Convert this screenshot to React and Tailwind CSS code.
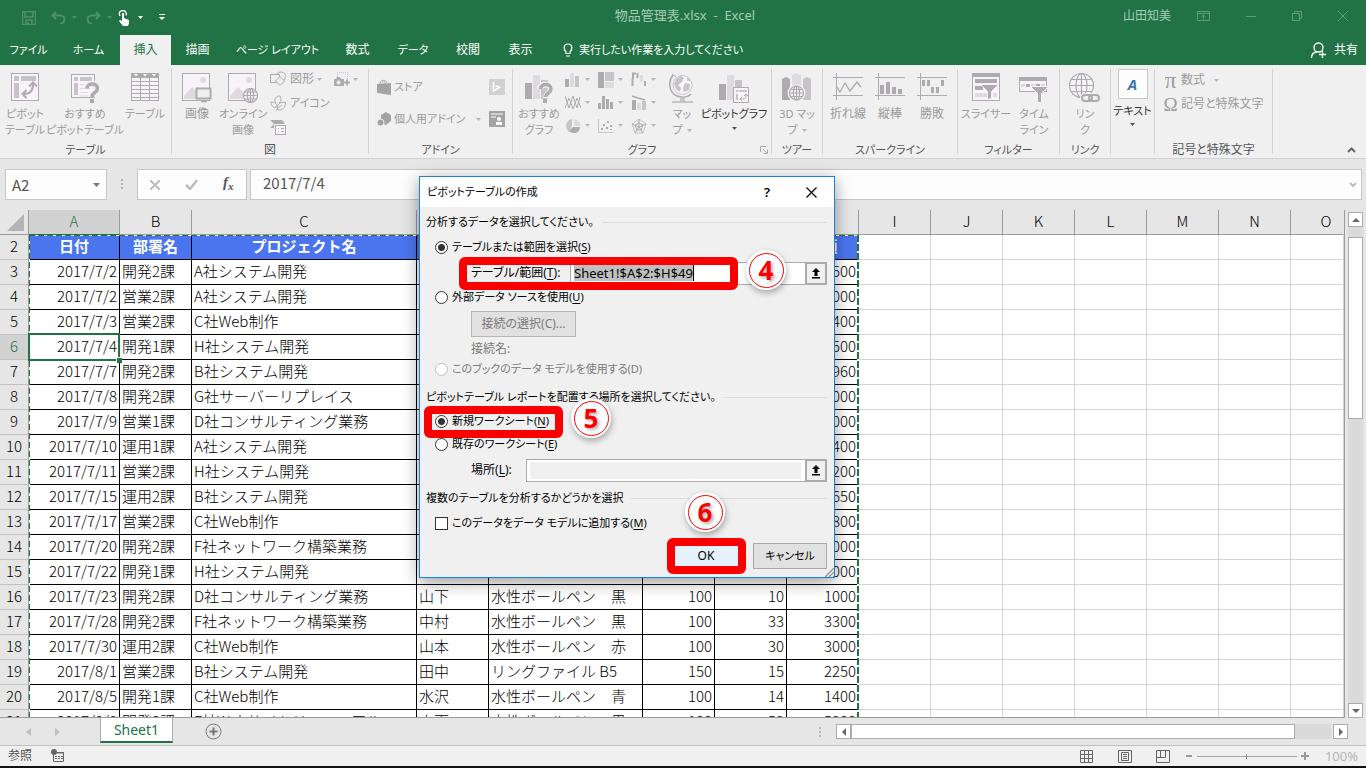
import React from "react";

const DARK = "#adabad";
const MID = "#c6c4c6";
const LIGHT = "#dedade";
const PALE = "#f7f3f8";

const Svg = ({ w, h, children, ...rest }) => (
  <svg width={w} height={h} viewBox={`0 0 ${w} ${h}`} fill="none" className="shrink-0" aria-hidden="true" {...rest}>
    {children}
  </svg>
);

const Caret = ({ color = "#b5b5b5" }) => (
  <Svg w={5} h={3}>
    <path d="M0 0h5L2.500 3z" fill={color} />
  </Svg>
);

/* ---------- ribbon icons ---------- */

const PivotIcon = () => (
  <Svg w={28} h={28}>
    <rect x=".5" y=".5" width="27" height="27" fill={PALE} stroke={DARK} />
    <path d="M3 3h5v5H3zM10 3h15v5H10zM3 10h5v15H3z" fill={MID} />
    <path d="M13 21c6 0 9-3 9-10" stroke={DARK} strokeWidth="2" />
    <path d="M18 13.500l4-4 4 4M15.500 17l-4 4 4 4" stroke={DARK} strokeWidth="2" />
  </Svg>
);

const SuggestPivotIcon = () => (
  <Svg w={28} h={30}>
    <rect x=".5" y="1.500" width="23" height="23" fill={PALE} stroke={DARK} />
    <path d="M3 4h4v4H3zM9 4h12v4H9zM3 10h4v12H3z" fill={MID} />
    <path d="M9 11.500h12M9 15.500h10M9 19.500h8M9 23h8" stroke={LIGHT} />
    <path d="M15.500 15c0-6 11-6 11 0 0 4-5 4-5 9" stroke="#f0f0f0" strokeWidth="6" />
    <path d="M16 15.500c0-6 10.500-6 10.500 0 0 4-5.500 4-5.500 8.500" stroke={DARK} strokeWidth="3.500" />
    <path d="M19 26h4v4h-4z" fill={DARK} />
  </Svg>
);

const TableIcon = () => (
  <Svg w={28} h={28}>
    <rect x=".5" y=".5" width="27" height="27" fill={PALE} stroke={DARK} />
    <path d="M0 0h28v5H0z" fill={DARK} />
    <path d="M3 1h4L5 3.500zM12 1h4l-2 2.500zM21 1h4l-2 2.500z" fill="#fff" />
    <path d="M0 8.500h28M0 12.500h28M0 16.500h28M0 20.500h28M0 24.500h28M9.500 5v23M18.500 5v23" stroke={DARK} />
  </Svg>
);

const Photo = () => (
  <>
    <rect x=".5" y=".5" width="27" height="27" fill={PALE} stroke={DARK} />
    <circle cx="21" cy="7" r="3" fill={LIGHT} />
    <path d="M2 26V23l8-9 9 9v3z" fill={LIGHT} />
  </>
);

const PictureIcon = () => (
  <Svg w={30} h={30}>
    <Photo />
    <path d="M14.500 15.500h14v10h-14z" fill="#f0f0f0" stroke={DARK} strokeWidth="2" />
    <path d="M19 28.500h6" stroke={DARK} strokeWidth="1.500" />
  </Svg>
);

const Globe = ({ cx, cy, r }) => (
  <g stroke={DARK} strokeWidth="1.200">
    <circle cx={cx} cy={cy} r={r} fill={PALE} />
    <ellipse cx={cx} cy={cy} rx={r / 2.2} ry={r} />
    <path
      d={`M${cx} ${cy - r}v${r * 2}M${cx - r} ${cy}h${r * 2}M${cx - r * 0.85} ${cy - r / 2}h${r * 1.7}M${cx - r * 0.85} ${cy + r / 2}h${r * 1.7}`}
    />
  </g>
);

const OnlinePictureIcon = () => (
  <Svg w={30} h={30}>
    <Photo />
    <Globe cx={22.5} cy={22.5} r={7} />
  </Svg>
);

const ShapesIcon = () => (
  <Svg w={17} h={16}>
    <circle cx="11" cy="5.500" r="4.500" stroke={MID} strokeWidth="1.500" />
    <path d="M.5 3.500h9v8h-9z" fill="#f0f0f0" stroke={DARK} />
    <path d="M10 5.500l4.500 4.500-4.500 4.500L5.500 10z" fill="#f0f0f0" stroke={DARK} />
  </Svg>
);

const LeafIcon = () => (
  <Svg w={17} h={16} stroke={DARK}>
    <path d="M6 8c-3-4 0-7 4-7 1 3 2 5-1 7" />
    <path d="M1 7c3 0 6 1 6 5-4 1-6-1-6-5z" />
    <path d="M15.500 7.500c-6-1-9 2-8 7 5 2 8-2 8-7zM6 15.500c2-3 4-4 6-5" />
  </Svg>
);

const SmartArtIcon = () => (
  <Svg w={17} h={17}>
    <path d="M0 1h12l3 4H4z" fill={DARK} />
    <path d="M0 9l4-4v4z" fill={DARK} />
    <rect x="5.500" y="6.500" width="10" height="9" fill={PALE} stroke={DARK} />
    <path d="M8 9.500h1M8 12.500h1M11 9.500h3M11 12.500h3" stroke={DARK} />
  </Svg>
);

const ScreenshotIcon = () => (
  <Svg w={16} h={15}>
    <path d="M3.500 7V.5h10V8" stroke={MID} strokeDasharray="1 1" />
    <path d="M0 7h2l1-2h3l1 2h3v7H0z" fill={DARK} />
    <circle cx="4.500" cy="10.500" r="2" fill="#f0f0f0" />
    <path d="M10 10.500h6M13 7.500v6" stroke={DARK} strokeWidth="2" />
  </Svg>
);

const StoreIcon = () => (
  <Svg w={14} h={16}>
    <path d="M3 5c0-5 5-5 5 0M5 4c1-4 5-3 5 0" stroke={DARK} />
    <path d="M0 5l14-1v12L0 14z" fill="#a3a3a3" />
  </Svg>
);

const AddinIcon = () => (
  <Svg w={14} h={15}>
    <path d="M9 0l5 3v6l-5 4-5-2V3z" fill="#a3a3a3" />
    <circle cx="3.500" cy="10.500" r="3.500" fill="#a3a3a3" stroke="#f0f0f0" />
  </Svg>
);

const BingIcon = () => (
  <Svg w={16} h={16}>
    <path d="M0 0h16v16H0z" fill="#d3d0d3" />
    <path d="M4.500 3v9l6-3.500-4-2" stroke="#fff" strokeWidth="1.500" />
  </Svg>
);

const PeopleGraphIcon = () => (
  <Svg w={16} h={16}>
    <path d="M0 0h16v16H0z" fill="#a3a3a3" />
    <path d="M2 3h12M2 6h5" stroke="#fff" />
    <circle cx="10" cy="8" r="2" fill="#fff" />
    <path d="M7 14v-3h6v3z" fill="#fff" />
  </Svg>
);

const SuggestChartIcon = () => (
  <Svg w={28} h={30}>
    <path d="M0 10h7v16H0z" fill={DARK} />
    <path d="M8 2h7v24H8z" fill={LIGHT} />
    <path d="M16 7h7v19h-7z" fill={MID} />
    <path d="M15 16c0-6 11-6 11 0 0 4-5 4-5 9" stroke="#f0f0f0" strokeWidth="6" />
    <path d="M15.500 16c0-6 10.500-6 10.500 0 0 4-5.500 4-5.500 8" stroke={DARK} strokeWidth="3.500" />
    <path d="M18 26h4v4h-4z" fill={DARK} />
  </Svg>
);

const chartIcons = [
  <Svg w={16} h={16} key="col">
    <path d="M0 7h4v8H0z" fill={DARK} />
    <path d="M5 1h4v14H5z" fill={LIGHT} />
    <path d="M10 4h4v11h-4z" fill={MID} />
  </Svg>,
  <Svg w={16} h={16} key="tree">
    <path d="M0 0h6v16H0z" fill={DARK} />
    <path d="M7 0h9v9H7z" fill={MID} />
    <path d="M7 10h9v6H7z" fill={LIGHT} />
  </Svg>,
  <Svg w={16} h={16} key="fall">
    <path d="M1.500 6v8M6.500 1v5M5 1.500H2v5" stroke={DARK} strokeWidth="2" />
    <path d="M10.500 3v7" stroke={LIGHT} strokeWidth="3" />
    <path d="M14 9v5" stroke={DARK} strokeWidth="2" />
  </Svg>,
  <Svg w={16} h={16} key="line">
    <path d="M0 1l4 12 4-12 4 12 3-11" stroke={DARK} />
    <path d="M0 13L4 3l4 11 4-11 4 10" stroke={DARK} />
  </Svg>,
  <Svg w={16} h={16} key="hist">
    <path d="M0 8h3v6H0zM4 1h3v13H4zM8 4h3v10H8zM12 7h3v7h-3z" fill={DARK} />
  </Svg>,
  <Svg w={16} h={16} key="combo">
    <path d="M1 5h4v10H1z" fill={DARK} />
    <path d="M6 8h4v7H6z" fill={LIGHT} />
    <path d="M11 6h4v9h-4z" fill={MID} />
    <path d="M1 1l6 2 7 2" stroke={DARK} strokeWidth="1.500" />
  </Svg>,
  <Svg w={16} h={16} key="pie">
    <path d="M9 8V1a7 7 0 0 1 6.500 7z" fill={LIGHT} />
    <path d="M7 8V1a7 7 0 0 0-6 7c0 3 2 5 3 6z" fill={MID} />
    <path d="M8 9h7c0 6-7 8-11 4z" fill={DARK} />
  </Svg>,
  <Svg w={16} h={16} key="dots">
    <path d="M.5 1v13.500H15" stroke={MID} />
    <path d="M3 10h2v2H3zM5 6h2v2H5zM8 9h2v2H8zM9 3h2v2H9zM12 7h2v2h-2zM12 11h2v1h-2z" fill={DARK} />
  </Svg>,
  <Svg w={16} h={16} key="radar">
    <path d="M8 1l7 5-3 9H4L1 6z" stroke={MID} />
    <path d="M8 5l4 2-2 5H6L4 7zM8 1v8l7-3M8 9l4 6M8 9l-4 6M8 9L1 6" stroke={DARK} />
  </Svg>,
];

const MapIcon = () => (
  <Svg w={26} h={30}>
    <circle cx="13.500" cy="12" r="9.500" fill={PALE} stroke={MID} />
    <path d="M7 6l5-3 3 2-2 4-4 3 3 3-1 4-4-3-2-5zM16 10l5 1-1 6-5 2-1-4zM18 4l4 4-4 0z" fill={MID} />
    <path d="M4 2C-1 8 0 18 6 22c5 3 12 3 16-1" stroke={DARK} strokeWidth="1.500" />
    <path d="M3 1l4 3" stroke={DARK} />
    <path d="M11 24h5v4h-5zM3 28h21v2H3z" fill={MID} />
  </Svg>
);

const PivotChartIcon = () => (
  <Svg w={30} h={30}>
    <path d="M0 11h7v16H0z" fill={DARK} />
    <path d="M8 2h7v25H8z" fill={LIGHT} />
    <path d="M16 7h7v8h-7z" fill={MID} />
    <rect x="14.500" y="14.500" width="15" height="15" fill={PALE} stroke={DARK} />
    <path d="M17 17h2v2h-2zM20 17h8v2h-8zM17 21h2v6h-2z" fill={MID} />
    <path d="M21 26h3c2 0 3-1 3-4M25 23l2-2 2 2M23 24l-2 2 2 2" stroke={DARK} />
  </Svg>
);

const Map3DIcon = () => (
  <Svg w={30} h={28}>
    <path d="M0 6l4-2 4 2v21H0z" fill={DARK} />
    <path d="M10 2l4-2 5 2v18h-9z" fill={LIGHT} />
    <path d="M21 6l4-2 4 2v21h-8z" fill={MID} />
    <circle cx="14.500" cy="20" r="9" fill="#f0f0f0" />
    <Globe cx={14.5} cy={20} r={7} />
  </Svg>
);

const SparkFrame = ({ children }) => (
  <Svg w={30} h={28}>
    <path d="M0 4.500h30M0 22.500h30M3.500 0v27" stroke={DARK} />
    {children}
  </Svg>
);

const SlicerIcon = () => (
  <Svg w={28} h={28}>
    <rect x=".5" y=".5" width="27" height="27" fill={PALE} stroke={DARK} />
    <path d="M0 0h28v4H0zM3 6h22v4H3zM3 13h8v4H3z" fill={DARK} />
    <path d="M3 20h12v4H3zM21 20h4v4h-4z" fill={LIGHT} />
    <path d="M8.500 11.500h18l-7 7v7l-4 1v-8z" fill={DARK} stroke={PALE} />
  </Svg>
);

const TimelineIcon = () => (
  <Svg w={30} h={30}>
    <rect x=".5" y="4.500" width="27" height="14" fill={PALE} stroke={DARK} />
    <path d="M0 4h28v4H0z" fill={DARK} />
    <path d="M2 11h4v3H2zM12 11h4v3h-4zM22 11h4v3h-4z" fill={LIGHT} />
    <path d="M7 11h4v3H7zM17 11h4v3h-4z" fill={DARK} />
    <path d="M11.500 13.500h18l-7 7v9h-4v-9z" fill={DARK} stroke={PALE} />
  </Svg>
);

const LinkIcon = () => (
  <Svg w={32} h={30}>
    <Globe cx={12.5} cy={12.5} r={12} />
    <rect x="11" y="20" width="21" height="10" rx="5" fill="#f0f0f0" />
    <rect x="13" y="22" width="10" height="6" rx="3" stroke={DARK} strokeWidth="2" />
    <rect x="20" y="22" width="10" height="6" rx="3" stroke={DARK} strokeWidth="2" />
  </Svg>
);

/* ---------- ribbon ---------- */

const BigButton = ({ icon, lines, width, kanji, dark, arrow }) => (
  <button
    className={`flex flex-col items-center pt-2 shrink-0 ${width} ${kanji ? "text-[12px]" : "text-[11px]"} ${
      dark ? "text-[#333]" : "text-[#9b9b9b]"
    }`}
  >
    <span className="flex h-[33px] items-start justify-center">{icon}</span>
    {lines.map((line, i) => (
      <span key={line} className="flex h-4 items-center gap-1 whitespace-nowrap">
        {line}
        {arrow === "inline" && i === lines.length - 1 && <Caret />}
      </span>
    ))}
    {arrow === "below" && (
      <span className="flex h-3 items-center">
        <Caret color="#555" />
      </span>
    )}
  </button>
);

const Group = ({ title, width, kanji, children }) => (
  <div className={`flex flex-col shrink-0 ${width}`}>
    <div className="flex h-[77px] w-full">{children}</div>
    <div className={`h-4 text-center leading-4 text-[#555] ${kanji ? "text-[12px]" : "text-[11px]"}`}>{title}</div>
  </div>
);

const Divider = () => <div className="mt-1 h-[85px] w-px shrink-0 bg-[#d2d2d2]" />;

const SmallButton = ({ icon, label, kanji, arrow }) => (
  <button
    className={`flex h-6 items-center gap-[3px] whitespace-nowrap text-[#9b9b9b] ${kanji ? "text-[12px]" : "text-[11px]"}`}
  >
    {icon}
    {label && <span>{label}</span>}
    {arrow && <Caret />}
  </button>
);

const Ribbon = () => (
  <div className="flex h-[94px] shrink-0 border-b border-[#d2d2d2] bg-[#f0f0f0]">
    <Group title="テーブル" width="w-[171px]">
      <BigButton width="w-[50px]" icon={<PivotIcon />} lines={["ピボット", "テーブル"]} />
      <BigButton width="w-[70px]" icon={<SuggestPivotIcon />} lines={["おすすめ", "ピボットテーブル"]} />
      <BigButton width="w-[50px]" icon={<TableIcon />} lines={["テーブル"]} />
    </Group>
    <Divider />
    <Group title="図" width="w-[196px]" kanji>
      <BigButton width="w-[50px]" icon={<PictureIcon />} lines={["画像"]} kanji />
      <BigButton width="w-[42px]" icon={<OnlinePictureIcon />} lines={["オンライン", "画像"]} />
      <div className="ml-1.5 flex w-16 flex-col pt-0.5">
        <SmallButton icon={<ShapesIcon />} label="図形" arrow kanji />
        <SmallButton icon={<LeafIcon />} label="アイコン" />
        <SmallButton icon={<SmartArtIcon />} />
      </div>
      <div className="pt-0.5">
        <SmallButton icon={<ScreenshotIcon />} arrow />
      </div>
    </Group>
    <Divider />
    <Group title="アドイン" width="w-[143px]">
      <div className="flex w-full flex-col gap-2 pt-2.5 pr-[7px] pl-2">
        <div className="flex items-center justify-between">
          <SmallButton icon={<StoreIcon />} label="ストア" />
          <BingIcon />
        </div>
        <div className="flex items-center justify-between">
          <SmallButton icon={<AddinIcon />} label="個人用アドイン" />
          <span className="flex items-center gap-2">
            <Caret />
            <PeopleGraphIcon />
          </span>
        </div>
      </div>
    </Group>
    <Divider />
    <div className="relative flex shrink-0">
      <Group title="グラフ" width="w-[258px]">
        <BigButton width="w-[52px]" icon={<SuggestChartIcon />} lines={["おすすめ", "グラフ"]} />
        <div className="grid w-[99px] grid-cols-3 content-start pt-[3px] [grid-auto-rows:23px]">
          {chartIcons.map((icon) => (
            <button key={icon.key} className="flex items-center gap-1">
              {icon}
              <Caret />
            </button>
          ))}
        </div>
        <BigButton width="w-[36px]" icon={<MapIcon />} lines={["マッ", "プ"]} arrow="inline" />
        <BigButton width="w-[68px]" icon={<PivotChartIcon />} lines={["ピボットグラフ"]} dark arrow="below" />
      </Group>
      <Svg w={8} h={8} style={{ position: "absolute", right: 3, bottom: 4 }}>
        <path d="M.5 6V.5H6M3 3l4 4M7.500 3.500v4h-4" stroke={DARK} />
      </Svg>
    </div>
    <Divider />
    <Group title="ツアー" width="w-[50px]">
      <BigButton width="w-[50px]" icon={<Map3DIcon />} lines={["3D マッ", "プ"]} arrow="inline" />
    </Group>
    <Divider />
    <Group title="スパークライン" width="w-[134px]">
      <span className="w-1" />
      <BigButton
        width="w-[42px]"
        kanji
        lines={["折れ線"]}
        icon={
          <SparkFrame>
            <path d="M4 14l3 5 5-9 5 8 7-9 4 5" stroke={DARK} strokeWidth="1.300" />
          </SparkFrame>
        }
      />
      <BigButton
        width="w-[42px]"
        kanji
        lines={["縦棒"]}
        icon={
          <SparkFrame>
            <path d="M5 12h4v9H5zM11 9h4v12h-4zM17 14h4v7h-4zM23 16h4v5h-4z" fill={DARK} />
          </SparkFrame>
        }
      />
      <BigButton
        width="w-[42px]"
        kanji
        lines={["勝敗"]}
        icon={
          <SparkFrame>
            <path d="M5 7h3v6H5zM10 7h3v6h-3zM14 14h3v6h-3zM19 14h3v6h-3zM24 7h3v6h-3z" fill={DARK} />
          </SparkFrame>
        }
      />
    </Group>
    <Divider />
    <Group title="フィルター" width="w-[101px]">
      <BigButton width="w-[56px]" icon={<SlicerIcon />} lines={["スライサー"]} />
      <BigButton width="w-[40px]" icon={<TimelineIcon />} lines={["タイム", "ライン"]} />
    </Group>
    <Divider />
    <Group title="リンク" width="w-[50px]">
      <BigButton width="w-[50px]" icon={<LinkIcon />} lines={["リン", "ク"]} />
    </Group>
    <Divider />
    <Group title="" width="w-[43px]">
      <button className="flex w-full flex-col items-center pt-1 text-[11px] text-[#333]">
        <span className="flex h-[30px] w-[30px] items-center justify-center border border-[#c6c6c6] bg-[#fdfdfd] text-[15px] font-bold text-[#3c76b4] italic">
          A
        </span>
        <span className="mt-1 h-5 whitespace-nowrap">テキスト</span>
        <Caret color="#555" />
      </button>
    </Group>
    <Divider />
    <Group title="記号と特殊文字" width="w-[117px]" kanji>
      <div className="flex flex-col pt-[3px] pl-2 text-[12px]">
        <button className="flex h-6 items-center gap-[3px] text-[#9b9b9b]">
          <span className="w-[15px] text-center font-['Liberation_Serif',serif] text-[23px] leading-none">π</span>
          数式
          <span className="ml-1.5">
            <Caret />
          </span>
        </button>
        <button className="flex h-6 items-center gap-[3px] whitespace-nowrap text-[#9b9b9b]">
          <span className="w-[15px] text-center font-['Liberation_Serif',serif] text-[19px] leading-none">Ω</span>
          記号と特殊文字
        </button>
      </div>
    </Group>
    <Divider />
    <button className="ml-auto flex items-end pr-2.5 pb-[5px]" aria-label="リボンを折りたたむ">
      <Svg w={9} h={6}>
        <path d="M1 5l3.500-3.500L8 5" stroke="#666" strokeWidth="2" />
      </Svg>
    </button>
  </div>
);

/* ---------- title bar and tabs ---------- */

const TitleBar = () => (
  <div className="flex h-[35px] shrink-0 items-center text-[12px] text-[#a6cbb5]">
    <div className="flex flex-1 items-center pl-[22px] text-[#4f9069]">
      <Svg w={14} h={14}>
        <path d="M.5.5h13v13H.5zM3 1v5h8V1M4 13V9h6v4M6 11v2" stroke="currentColor" strokeWidth="1.500" />
      </Svg>
      <span className="ml-[15px] flex items-center gap-[6px]">
        <Svg w={15} h={13}>
          <path d="M5 1L1.500 4.500 5 8M2 4.500h7c6 0 6 8 0 8" stroke="currentColor" strokeWidth="2" />
        </Svg>
        <Caret color="#4f9069" />
      </span>
      <span className="ml-[9px] flex items-center gap-[6px]">
        <Svg w={15} h={13}>
          <path d="M10 1l3.500 3.500L10 8M13 4.500H6c-6 0-6 8 0 8" stroke="currentColor" strokeWidth="2" />
        </Svg>
        <Caret color="#4f9069" />
      </span>
      <span className="ml-[6px] flex items-center gap-[8px]">
        <Svg w={12} h={16}>
          <path d="M2 6C0 2 3 .5 5 .5s4 2 3 5" stroke="#fff" strokeWidth="1.300" />
          <path d="M4 3h2v5l5 2v3l-1 3H5l-4-5 1-1 2 1z" fill="#fff" />
        </Svg>
        <Caret color="#fff" />
      </span>
      <Svg w={6} h={7} style={{ marginLeft: 16 }}>
        <path d="M0 .5h6" stroke="#fff" />
        <path d="M0 3h6L3 6z" fill="#fff" />
      </Svg>
    </div>
    <div className="pb-1 text-[13px] whitespace-pre">物品管理表.xlsx  -  Excel</div>
    <div className="flex flex-1 items-center justify-end pr-[18px] pb-1">
      <span>山田知美</span>
      <span className="ml-[26px] flex items-center gap-9 text-[#5f9d78]">
        <Svg w={13} h={10}>
          <path d="M.5.5h12v9H.5zM0 2.500h13M6.500 8V4M4.500 6l2-2 2 2" stroke="currentColor" />
        </Svg>
        <Svg w={10} h={10}>
          <path d="M0 5.500h10" stroke="currentColor" />
        </Svg>
        <Svg w={10} h={10}>
          <path d="M.5 2.500h7v7h-7zM2.500 2V.5h7v7H8" stroke="currentColor" />
        </Svg>
        <Svg w={10} h={10}>
          <path d="M0 0l10 10M10 0L0 10" stroke="currentColor" />
        </Svg>
      </span>
    </div>
  </div>
);

const tabs = [
  { name: "ファイル", width: "w-[57px] text-[11px]" },
  { name: "ホーム", width: "w-[63px] text-[11px]" },
  { name: "挿入", width: "w-[51px] text-[12px]", active: true },
  { name: "描画", width: "w-[53px] text-[12px]" },
  { name: "ページ レイアウト", width: "w-[107px] text-[11px]" },
  { name: "数式", width: "w-[53px] text-[12px]" },
  { name: "データ", width: "w-[58px] text-[11px]" },
  { name: "校閲", width: "w-[52px] text-[12px]" },
  { name: "表示", width: "w-[53px] text-[12px]" },
];

const TabRow = () => (
  <div className="flex h-[30px] shrink-0 items-stretch text-white">
    {tabs.map((tab) => (
      <button
        key={tab.name}
        className={`shrink-0 whitespace-nowrap ${tab.width} ${tab.active ? "bg-[#f0f0f0] text-[#217346]" : ""}`}
      >
        {tab.name}
      </button>
    ))}
    <button className="ml-4 flex items-center gap-1.5 text-[11px]">
      <Svg w={10} h={14}>
        <path d="M3 9C0 6 .5 1 5 1s5 5 2 8v1.500H3zM3 13h4" stroke="#fff" strokeWidth="1.200" />
      </Svg>
      実行したい作業を入力してください
    </button>
    <button className="ml-auto flex items-center gap-2 pr-2 text-[12px]">
      <Svg w={15} h={16}>
        <circle cx="7.500" cy="5.500" r="4.500" stroke="#fff" strokeWidth="1.300" />
        <path d="M.5 16c0-4 2-5.500 5-6M8 12.500h7M11.500 9v7" stroke="#fff" strokeWidth="1.300" />
      </Svg>
      共有
    </button>
  </div>
);

/* ---------- formula bar ---------- */

const FormulaBar = () => (
  <div className="flex h-[51px] shrink-0 items-start pt-2.5 pr-1 pl-[5px]">
    <div className="flex h-[31px] w-[102px] shrink-0 items-center border border-[#c6c6c6] bg-[#fdfdfd] pr-1.5">
      <input
        aria-label="名前ボックス"
        defaultValue="A2"
        className="w-full min-w-0 pt-0.5 pl-1.5 font-['Noto_Sans_CJK_JP',sans-serif] text-[15px] text-[#555]"
      />
      <Svg w={7} h={4}>
        <path d="M0 0h7L3.500 4z" fill="#777" />
      </Svg>
    </div>
    <Svg w={30} h={31}>
      <path d="M14 10h2v2h-2zM14 14h2v2h-2zM14 18h2v2h-2z" fill="#b0b0b0" />
    </Svg>
    <div className="flex h-[31px] w-[110px] shrink-0 items-center justify-around border border-[#c6c6c6] bg-[#fdfdfd]">
      <button aria-label="キャンセル">
        <Svg w={10} h={10}>
          <path d="M0 0l10 10M10 0L0 10" stroke="#bdbdbd" strokeWidth="2" />
        </Svg>
      </button>
      <button aria-label="入力">
        <Svg w={13} h={11}>
          <path d="M1 6l4 4 7-9" stroke="#bdbdbd" strokeWidth="2.500" />
        </Svg>
      </button>
      <button className="pb-1 font-['Liberation_Serif',serif] text-[15px] font-bold text-[#555] italic">
        f<sub className="text-[11px]">x</sub>
      </button>
    </div>
    <div className="ml-[3px] flex h-[31px] flex-1 items-center border border-[#c6c6c6] bg-[#fdfdfd] pr-1">
      <input
        aria-label="数式バー"
        defaultValue="2017/7/4"
        className="flex-1 pb-0.5 pl-3 font-['Noto_Sans_CJK_JP',sans-serif] text-[15px] text-[#555]"
      />
      <Svg w={8} h={6}>
        <path d="M1 1l3 3 3-3" stroke="#bdbdbd" strokeWidth="2" />
      </Svg>
    </div>
  </div>
);

/* ---------- sheet ---------- */

const columns = ["A", "B", "C", "D", "E", "F", "G", "H", "I", "J", "K", "L", "M", "N", "O"];
const header = ["日付", "部署名", "プロジェクト名", "", "", "", "", "金額"];
const rows = [
  ["2017/7/2", "開発2課", "A社システム開発", "", "", "", "", 1500],
  ["2017/7/2", "営業2課", "A社システム開発", "", "", "", "", 2000],
  ["2017/7/3", "営業2課", "C社Web制作", "", "", "", "", 1400],
  ["2017/7/4", "開発1課", "H社システム開発", "", "", "", "", 2500],
  ["2017/7/7", "開発2課", "B社システム開発", "", "", "", "", 960],
  ["2017/7/8", "開発2課", "G社サーバーリプレイス", "", "", "", "", 3000],
  ["2017/7/9", "営業1課", "D社コンサルティング業務", "", "", "", "", 1000],
  ["2017/7/10", "運用1課", "A社システム開発", "", "", "", "", 2400],
  ["2017/7/11", "営業2課", "H社システム開発", "", "", "", "", 1200],
  ["2017/7/15", "運用2課", "B社システム開発", "", "", "", "", 1650],
  ["2017/7/17", "営業2課", "C社Web制作", "", "", "", "", 1800],
  ["2017/7/20", "開発2課", "F社ネットワーク構築業務", "", "", "", "", 2000],
  ["2017/7/22", "開発1課", "H社システム開発", "", "", "", "", 3000],
  ["2017/7/23", "開発2課", "D社コンサルティング業務", "山下", "水性ボールペン　黒", 100, 10, 1000],
  ["2017/7/28", "開発2課", "F社ネットワーク構築業務", "中村", "水性ボールペン　黒", 100, 33, 3300],
  ["2017/7/30", "運用2課", "C社Web制作", "山本", "水性ボールペン　赤", 100, 30, 3000],
  ["2017/8/1", "営業2課", "B社システム開発", "田中", "リングファイル B5", 150, 15, 2250],
  ["2017/8/5", "開発1課", "C社Web制作", "水沢", "水性ボールペン　青", 100, 14, 1400],
  ["2017/8/8", "開発2課", "F社Webサイトリニューアル", "山下", "水性ボールペン　黒", 100, 53, 5300],
];
const alignRight = [true, false, false, false, false, true, true, true];
const emptyColumns = columns.slice(8);

const RowHead = ({ n, active }) => (
  <th
    className={`border-r border-b border-r-[#9b9b9b] border-b-[#c0c0c0] pb-0.5 font-light ${
      active ? "bg-[#d2d2d2] text-[#217346]" : "bg-[#e6e6e6]"
    }`}
  >
    {n}
  </th>
);

const EmptyCells = () => emptyColumns.map((c) => <td key={c} className="border-r border-b border-[#d4d4d4]" />);

const Sheet = () => (
  <div className="relative min-w-0 flex-1 overflow-hidden border-r border-b border-[#9b9b9b] bg-white">
    <table className="w-full table-fixed border-separate border-spacing-0 font-['Noto_Sans_CJK_JP',sans-serif] text-[15px] leading-[22px] font-light whitespace-nowrap text-black">
      <colgroup>
        <col className="w-[29px]" />
        <col className="w-[91px]" />
        <col className="w-[72px]" />
        <col className="w-[225px]" />
        <col className="w-[72px]" />
        <col className="w-[154px]" />
        <col className="w-[72px]" />
        <col className="w-[72px]" />
        <col className="w-[72px]" />
        <col className="w-[72px]" />
        <col className="w-[72px]" />
        <col className="w-[72px]" />
        <col className="w-[72px]" />
        <col className="w-[72px]" />
        <col className="w-[72px]" />
        <col />
      </colgroup>
      <thead>
        <tr className="h-[25px]">
          <th className="border-r border-b border-[#9b9b9b] bg-[#e6e6e6]">
            <div className="flex justify-end pr-1">
              <Svg w={17} h={17}>
                <path d="M17 0v17H0z" fill="#b4b4b4" />
              </Svg>
            </div>
          </th>
          {columns.map((c) => (
            <th
              key={c}
              className={`border-r border-b pb-0.5 font-light ${
                c === "A"
                  ? "border-r-[#9b9b9b] border-b-[#217346] bg-[#d2d2d2] text-[#217346]"
                  : c === "O"
                    ? "border-r-[#e6e6e6] border-b-[#9b9b9b] bg-[#e6e6e6] pl-[18px]"
                    : "border-[#9b9b9b] bg-[#e6e6e6]"
              }`}
            >
              {c}
            </th>
          ))}
        </tr>
      </thead>
      <tbody>
        <tr>
          <RowHead n={2} />
          {header.map((h, i) => (
            <td key={i} className="border-r border-b border-black bg-[#4a75ee] pb-0.5 text-center font-bold text-white">
              {h}
            </td>
          ))}
          <EmptyCells />
        </tr>
        {rows.map((row, r) => (
          <tr key={r}>
            <RowHead n={r + 3} active={r === 3} />
            {row.map((value, c) => (
              <td
                key={c}
                className={`relative border-r border-b border-black px-0.5 pb-0.5 ${alignRight[c] ? "text-right" : "text-left"}`}
              >
                {value}
                {r === 3 && c === 0 && (
                  <span className="absolute -inset-x-px -top-0.5 -bottom-0.5 z-10 border-2 border-[#217346]">
                    <span className="absolute -right-1 -bottom-1 h-1.5 w-1.5 border-t border-l border-white bg-[#217346]" />
                  </span>
                )}
              </td>
            ))}
            <EmptyCells />
          </tr>
        ))}
      </tbody>
    </table>
    {/* copied range outline */}
    <div className="absolute top-[25px] left-[29px] h-px w-[830px] bg-[repeating-linear-gradient(90deg,#217346_0_6px,#fff_6px_9px)]" />
    <div className="absolute top-[25px] bottom-0 left-[29px] w-px bg-[repeating-linear-gradient(180deg,#217346_0_6px,#fff_6px_9px)]" />
    <div className="absolute top-[25px] bottom-0 left-[857px] w-0.5 bg-[repeating-linear-gradient(180deg,#217346_0_7px,#fff_7px_9px)]" />
  </div>
);

const ScrollButton = ({ d, label }) => (
  <button aria-label={label} className="flex h-[15px] w-[15px] shrink-0 items-center justify-center border border-[#ababab] bg-white">
    <Svg w={8} h={8}>
      <path d={d} fill="#666" />
    </Svg>
  </button>
);

const VerticalScroll = () => (
  <div className="flex w-[21px] shrink-0 flex-col items-center bg-[#e6e6e6] pt-0.5">
    <ScrollButton label="上へ" d="M4 2l4 4H0z" />
    <div className="flex w-[15px] flex-1 flex-col bg-[#dadada] pt-2.5">
      <div className="h-[39%] w-full border border-[#ababab] bg-white" />
    </div>
    <ScrollButton label="下へ" d="M0 2h8L4 6z" />
  </div>
);

const SheetTabs = () => (
  <div className="flex h-7 shrink-0 items-start border-b border-[#c0c0c0] bg-[#e6e6e6]">
    <div className="flex h-full w-[100px] items-center gap-6 pl-[26px]">
      <Svg w={5} h={8}>
        <path d="M5 0v8L0 4z" fill="#c0c0c0" />
      </Svg>
      <Svg w={5} h={8}>
        <path d="M0 0v8l5-4z" fill="#c0c0c0" />
      </Svg>
    </div>
    <button className="h-[25px] w-[73px] border-x border-b-2 border-x-[#ababab] border-b-[#217346] bg-white text-[14px] leading-6 text-[#217346]">
      Sheet1
    </button>
    <button aria-label="新しいシート" className="mt-[5px] ml-8">
      <Svg w={17} h={17}>
        <circle cx="8.500" cy="8.500" r="7.500" stroke="#777" />
        <path d="M4.500 8.500h8M8.500 4.500v8" stroke="#777" strokeWidth="2" />
      </Svg>
    </button>
    <div className="mt-1.5 ml-auto flex w-[548px] items-center pr-[18px]">
      <Svg w={18} h={12}>
        <path d="M1 1h2v2H1zM1 5h2v2H1zM1 9h2v2H1z" fill="#b8b8b8" />
      </Svg>
      <ScrollButton label="左へ" d="M6 0v8L2 4z" />
      <div className="mr-0.5 flex h-[15px] flex-1 bg-[#dadada] pr-9">
        <div className="flex-1 border border-[#ababab] bg-white" />
      </div>
      <ScrollButton label="右へ" d="M2 0v8l4-4z" />
    </div>
  </div>
);

const StatusBar = () => (
  <div className="flex h-5 shrink-0 items-center bg-[#f0f0f0] pr-2 pl-2 text-[12px] text-[#555]">
    <span>参照</span>
    <Svg w={14} h={14} style={{ marginLeft: 19 }}>
      <path d="M2.500 5v7.500h10V3.500H6" stroke="#666" />
      <circle cx="3" cy="3" r="3" fill="#666" />
      <path d="M6 4h7M4 7.500h2M7 7.500h2M10 7.500h2M4 9.500h2M7 9.500h2M10 9.500h2" stroke="#666" />
    </Svg>
    <div className="ml-auto flex items-center gap-6">
      <Svg w={14} h={13}>
        <path d="M.5.5h12v12H.5zM4.500 0v13M8.500 0v13M0 4.500h13M0 8.500h13" stroke="#666" />
      </Svg>
      <Svg w={14} h={13}>
        <path d="M.5.5h13v12H.5zM3.500 2.500h7v8h-7zM5 4.500h4M5 6.500h4M5 8.500h4" stroke="#666" />
      </Svg>
      <Svg w={14} h={13}>
        <path d="M.5.5h13v12H.5zM4.500 0v7M9.500 0v7.500H0" stroke="#666" />
      </Svg>
    </div>
    <div className="ml-4 flex items-center gap-1">
      <Svg w={7} h={8}>
        <path d="M0 4h6" stroke="#999" strokeWidth="2" />
      </Svg>
      <input
        type="range"
        aria-label="ズーム"
        className="h-[5px] w-[100px] appearance-none bg-transparent [&::-webkit-slider-runnable-track]:h-px [&::-webkit-slider-runnable-track]:bg-[#a5a5a5] [&::-webkit-slider-thumb]:-mt-0.5 [&::-webkit-slider-thumb]:h-[5px] [&::-webkit-slider-thumb]:w-px [&::-webkit-slider-thumb]:appearance-none [&::-webkit-slider-thumb]:bg-[#888]"
      />
      <Svg w={8} h={8}>
        <path d="M0 4h8M4 0v8" stroke="#999" strokeWidth="2" />
      </Svg>
    </div>
    <span className="ml-4 text-[13px] leading-none text-[#b5b5b5]">100%</span>
  </div>
);

/* ---------- dialog ---------- */

const Key = ({ k }) => (
  <>
    (<span className="underline underline-offset-2">{k}</span>)
  </>
);

const Radio = ({ name, className = "", disabled, checked, children }) => (
  <label className={`flex h-5 items-center gap-1 pl-[15px] ${disabled ? "text-[#7a7a7a]" : ""} ${className}`}>
    <input
      type="radio"
      name={name}
      disabled={disabled}
      defaultChecked={checked}
      className="h-[13px] w-[13px] appearance-none rounded-full border border-[#333] bg-white checked:bg-[radial-gradient(circle,#333_0_3px,#fff_4px)] disabled:border-[#c0c0c0]"
    />
    <span>{children}</span>
  </label>
);

const Section = ({ className, children }) => (
  <div className={`flex h-5 items-center gap-2 pl-[6px] ${className}`}>
    <span>{children}</span>
    <span className="h-px flex-1 bg-[#dcdcdc]" />
  </div>
);

const PickButton = () => (
  <button aria-label="範囲を選択" className="flex h-[23px] w-[22px] items-center justify-center border-2 border-[#ababab] bg-[#f0f0f0]">
    <Svg w={8} h={11}>
      <path d="M4 0l4 4H5.500v4h-3V4H0zM0 9h8v1.500H0z" fill="#000" />
    </Svg>
  </button>
);

const Marker = ({ className }) => (
  <div className={`pointer-events-none absolute rounded-md border-8 border-[#fb0000] ${className}`} />
);

const Badge = ({ n, className }) => (
  <div
    className={`pointer-events-none absolute flex h-10 w-10 items-center justify-center rounded-full bg-white shadow-[1px_3px_6px_rgba(0,0,0,0.3)] ${className}`}
  >
    <span className="flex h-[35px] w-[35px] items-center justify-center rounded-full border border-[#fb0000] font-['Open_Sans',sans-serif] text-[26px] leading-none font-bold text-[#fb0000] [text-shadow:2px_2px_3px_rgba(0,0,0,0.3)]">
      {n}
    </span>
  </div>
);

const PivotDialog = () => (
  <div
    role="dialog"
    aria-label="ピボットテーブルの作成"
    className="absolute top-[176px] left-[419px] w-[416px] border border-[#1883d7] bg-[#f0f0f0] text-[11px] leading-5 whitespace-nowrap text-black shadow-[0_4px_16px_rgba(0,0,0,0.4)]"
  >
    <div className="flex h-[30px] items-center bg-white pr-[17px] pl-[7px]">
      <span>ピボットテーブルの作成</span>
      <button className="mr-9 ml-auto text-[13px] font-semibold">?</button>
      <button aria-label="閉じる">
        <Svg w={11} h={11}>
          <path d="M.5.5l10 10M10.500.5l-10 10" stroke="#000" strokeWidth="1.200" />
        </Svg>
      </button>
    </div>
    <div className="pr-[7px] pb-2">
      <Section className="mt-[5px]">分析するデータを選択してください。</Section>
      <Radio name="source" checked className="mt-[5px]">
        テーブルまたは範囲を選択
        <Key k="S" />
      </Radio>
      <div className="mt-1 flex h-6 items-center pl-[51px] text-[12px]">
        <label htmlFor="range" className="w-[99px]">
          テーブル/範囲
          <Key k="T" />:
        </label>
        <div className="flex h-[23px] flex-1 items-center border border-r-0 border-[#ababab] bg-white pl-[3px]">
          <input
            id="range"
            defaultValue="Sheet1!$A$2:$H$49"
            className="h-4 [field-sizing:content] border-r border-black bg-[#c0c0c0] text-[13px] leading-4"
          />
        </div>
        <PickButton />
      </div>
      <Radio name="source" className="mt-0.5">
        外部データ ソースを使用
        <Key k="U" />
      </Radio>
      <button
        disabled
        className="mt-1 ml-[51px] block h-[26px] w-[105px] border border-[#b5b5b5] bg-[#e1e1e1] text-[12px] text-[#7a7a7a]"
      >
        接続の選択(C)...
      </button>
      <div className="mt-0.5 h-5 pl-[51px] text-[12px] text-[#7a7a7a]">接続名:</div>
      <Radio name="source" disabled>
        このブックのデータ モデルを使用する(D)
      </Radio>
      <Section className="mt-2">ピボットテーブル レポートを配置する場所を選択してください。</Section>
      <Radio name="place" checked className="mt-1">
        新規ワークシート
        <Key k="N" />
      </Radio>
      <Radio name="place" className="mt-[3px]">
        既存のワークシート
        <Key k="E" />
      </Radio>
      <div className="mt-1 flex h-6 items-center pl-[51px] text-[12px]">
        <label htmlFor="location" className="w-[55px]">
          場所
          <Key k="L" />:
        </label>
        <div className="flex h-[23px] flex-1 border border-r-0 border-[#ababab] bg-white py-0.5 pr-1 pl-[3px]">
          <input id="location" disabled className="w-full bg-[#f0f0f0]" />
        </div>
        <PickButton />
      </div>
      <Section className="mt-1.5">複数のテーブルを分析するかどうかを選択</Section>
      <label className="mt-[5px] flex h-5 items-center gap-1 pl-[15px]">
        <input type="checkbox" className="h-[13px] w-[13px] appearance-none border border-[#333] bg-white" />
        <span>
          このデータをデータ モデルに追加する
          <Key k="M" />
        </span>
      </label>
      <div className="mt-2.5 flex justify-end gap-2.5">
        <button className="h-[26px] w-[74px] border border-[#1883d7] bg-[#e5f1fb] text-[12px]">OK</button>
        <button className="h-[26px] w-[74px] border border-[#ababab] bg-[#e1e1e1]">キャンセル</button>
      </div>
    </div>
    <Svg w={9} h={9} style={{ position: "absolute", right: 0, bottom: 0 }}>
      <path d="M0 9l9-9M4 9l5-5M8 9l1-1" stroke="#999" strokeWidth="1.500" />
    </Svg>
    <Marker className="top-[80px] left-[39px] h-[33px] w-[279px]" />
    <Marker className="top-[229px] left-[4px] h-[32px] w-[139px]" />
    <Marker className="top-[361px] left-[247px] h-[36px] w-[79px]" />
    <Badge n="4" className="top-[73px] left-[326px]" />
    <Badge n="5" className="top-[221px] left-[151px]" />
    <Badge n="6" className="top-[315px] left-[265px]" />
  </div>
);

const App = () => {
  return (
    <div className="relative flex h-screen w-full flex-col overflow-hidden bg-[#e6e6e6] font-['Noto_Sans','Noto_Sans_CJK_JP',sans-serif] [font-feature-settings:'palt']">
      <header className="shrink-0 bg-[#217346]">
        <TitleBar />
        <TabRow />
      </header>
      <Ribbon />
      <FormulaBar />
      <main className="flex min-h-0 flex-1 [font-feature-settings:normal]">
        <Sheet />
        <VerticalScroll />
      </main>
      <SheetTabs />
      <StatusBar />
      <div className="h-0.5 shrink-0 bg-[#111]" />
      <PivotDialog />
    </div>
  );
};

export default App;
